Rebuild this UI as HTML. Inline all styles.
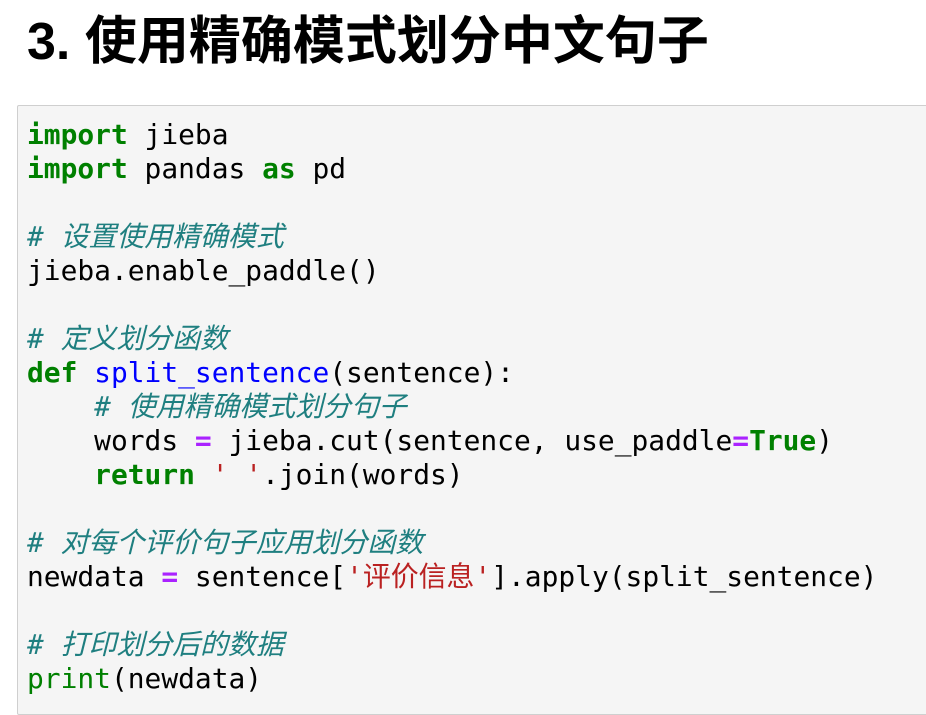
<!DOCTYPE html>
<html><head><meta charset="utf-8"><style>
body{margin:0;background:#fff;width:926px;height:708px;overflow:hidden;position:relative}
h1{position:absolute;left:27px;top:11px;margin:0;font:bold 52px/62px "Liberation Sans","Noto Sans CJK SC",sans-serif;color:#000;white-space:nowrap}
.box{position:absolute;left:17px;top:105px;width:920px;height:610px;background:#f5f5f5;border:1px solid #cfcfcf;border-radius:2px;box-sizing:border-box}
pre{margin:0;position:absolute;left:9px;top:12px;font:27.9px/34px "DejaVu Sans Mono","Noto Sans CJK SC",monospace;color:#000}
.k{color:#008000;font-weight:bold}.c{color:#1f7f80;font-style:italic}.f{color:#0000ff}.o{color:#aa22ff;font-weight:bold}.s{color:#ba2121}
</style></head><body>
<h1>3. 使用精确模式划分中文句子</h1>
<div class="box"><pre><span class="k">import</span> jieba
<span class="k">import</span> pandas <span class="k">as</span> pd

<span class="c"># 设置使用精确模式</span>
jieba.enable_paddle()

<span class="c"># 定义划分函数</span>
<span class="k">def</span> <span class="f">split_sentence</span>(sentence):
    <span class="c"># 使用精确模式划分句子</span>
    words <span class="o">=</span> jieba.cut(sentence, use_paddle<span class="o">=</span><span class="k">True</span>)
    <span class="k">return</span> <span class="s">' '</span>.join(words)

<span class="c"># 对每个评价句子应用划分函数</span>
newdata <span class="o">=</span> sentence[<span class="s">'评价信息'</span>].apply(split_sentence)

<span class="c"># 打印划分后的数据</span>
<span class="k" style="font-weight:normal">print</span>(newdata)</pre></div>
</body></html>
